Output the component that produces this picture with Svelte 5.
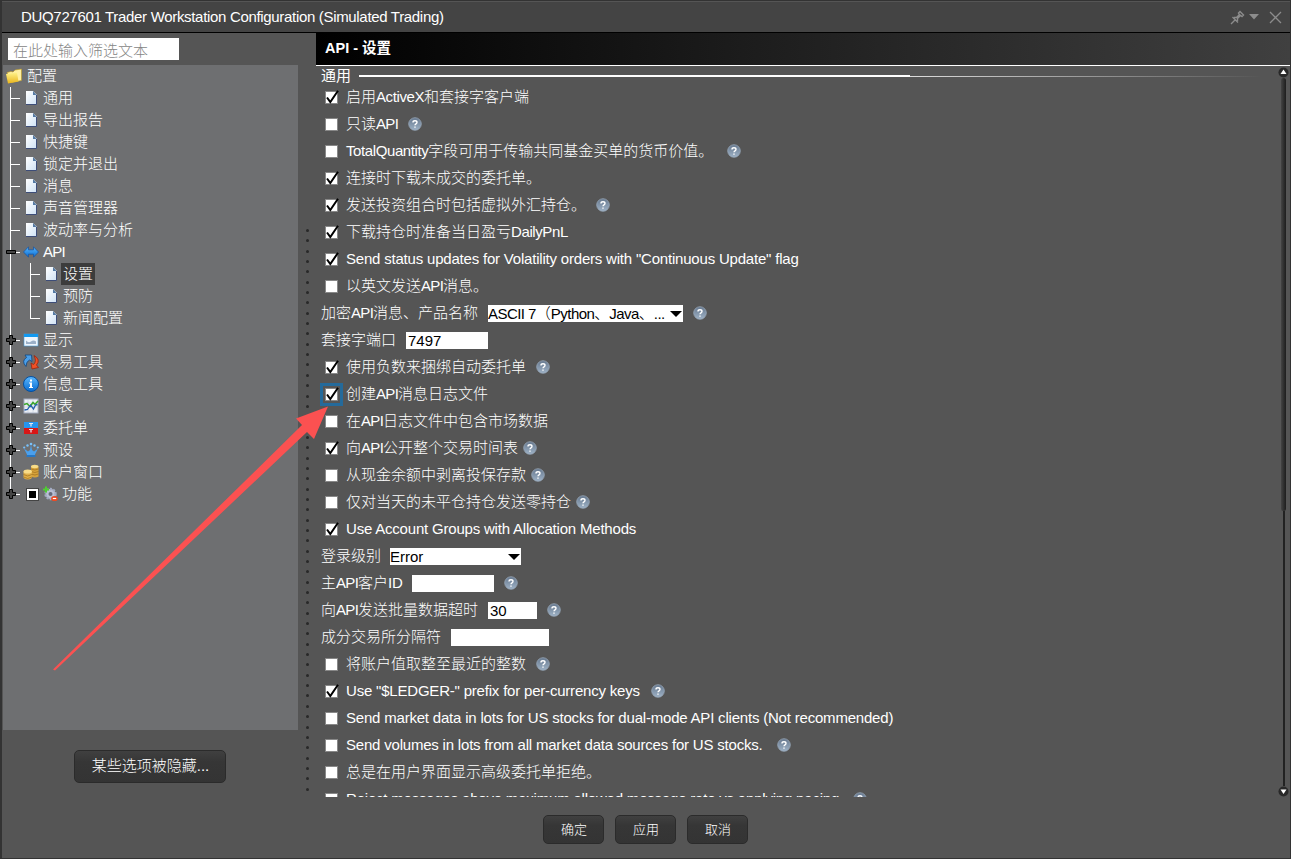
<script lang="ts">
	interface TreeNode {
		label: string;
		icon: string;
		level: number;
		expander?: 'plus' | 'minus';
		selected?: boolean;
		last?: boolean;
		check?: boolean;
	}

	interface Option {
		label: string;
		labelWidth?: number;
		kind?: 'check' | 'input' | 'select';
		checked?: boolean;
		focused?: boolean;
		value?: string;
		fieldWidth?: number;
		gap?: number;
		help?: boolean;
	}

	const tree: TreeNode[] = [
		{ label: '配置', icon: 'folder', level: 0 },
		{ label: '通用', icon: 'page', level: 1 },
		{ label: '导出报告', icon: 'page', level: 1 },
		{ label: '快捷键', icon: 'page', level: 1 },
		{ label: '锁定并退出', icon: 'page', level: 1 },
		{ label: '消息', icon: 'page', level: 1 },
		{ label: '声音管理器', icon: 'page', level: 1 },
		{ label: '波动率与分析', icon: 'page', level: 1 },
		{ label: 'API', icon: 'api', level: 1, expander: 'minus' },
		{ label: '设置', icon: 'page', level: 2, selected: true },
		{ label: '预防', icon: 'page', level: 2 },
		{ label: '新闻配置', icon: 'page', level: 2, last: true },
		{ label: '显示', icon: 'display', level: 1, expander: 'plus' },
		{ label: '交易工具', icon: 'trade', level: 1, expander: 'plus' },
		{ label: '信息工具', icon: 'info', level: 1, expander: 'plus' },
		{ label: '图表', icon: 'chart', level: 1, expander: 'plus' },
		{ label: '委托单', icon: 'order', level: 1, expander: 'plus' },
		{ label: '预设', icon: 'preset', level: 1, expander: 'plus' },
		{ label: '账户窗口', icon: 'coins', level: 1, expander: 'plus' },
		{ label: '功能', icon: 'feature', level: 1, expander: 'plus', last: true, check: true }
	];

	let options = $state<Option[]>([
		{ label: '启用ActiveX和套接字客户端', labelWidth: 183, checked: true },
		{ label: '只读API', labelWidth: 52, gap: 10, help: true },
		{ label: 'TotalQuantity字段可用于传输共同基金买单的货币价值。', labelWidth: 371, gap: 10, help: true },
		{ label: '连接时下载未成交的委托单。', checked: true },
		{ label: '发送投资组合时包括虚拟外汇持仓。', labelWidth: 240, gap: 10, checked: true, help: true },
		{ label: '下载持仓时准备当日盈亏DailyPnL', checked: true },
		{ label: 'Send status updates for Volatility orders with "Continuous Update" flag', checked: true },
		{ label: '以英文发送API消息。' },
		{ label: '加密API消息、产品名称', labelWidth: 167, kind: 'select', value: 'ASCII 7（Python、Java、...', fieldWidth: 195, gap: 10, help: true },
		{ label: '套接字端口', labelWidth: 85, kind: 'input', value: '7497', fieldWidth: 82 },
		{ label: '使用负数来捆绑自动委托单', labelWidth: 180, gap: 10, checked: true, help: true },
		{ label: '创建API消息日志文件', checked: true, focused: true },
		{ label: '在API日志文件中包含市场数据' },
		{ label: '向API公开整个交易时间表', labelWidth: 172, gap: 5, checked: true, help: true },
		{ label: '从现金余额中剥离投保存款', labelWidth: 180, gap: 5, help: true },
		{ label: '仅对当天的未平仓持仓发送零持仓', labelWidth: 225, gap: 5, help: true },
		{ label: 'Use Account Groups with Allocation Methods', checked: true },
		{ label: '登录级别', labelWidth: 69, kind: 'select', value: 'Error', fieldWidth: 131 },
		{ label: '主API客户ID', labelWidth: 91, kind: 'input', value: '', fieldWidth: 82, gap: 10, help: true },
		{ label: '向API发送批量数据超时', labelWidth: 167, kind: 'input', value: '30', fieldWidth: 49, gap: 10, help: true },
		{ label: '成分交易所分隔符', labelWidth: 130, kind: 'input', value: '', fieldWidth: 98 },
		{ label: '将账户值取整至最近的整数', labelWidth: 180, gap: 10, help: true },
		{ label: 'Use "$LEDGER-" prefix for per-currency keys', labelWidth: 295, gap: 10, checked: true, help: true },
		{ label: 'Send market data in lots for US stocks for dual-mode API clients (Not recommended)' },
		{ label: 'Send volumes in lots from all market data sources for US stocks.', labelWidth: 421, gap: 10, help: true },
		{ label: '总是在用户界面显示高级委托单拒绝。' },
		{ label: 'Reject messages above maximum allowed message rate vs applying pacing.', labelWidth: 497, gap: 10, help: true }
	]);

	const dots = Array.from({ length: 55 });

	function toggle(option: Option) {
		option.checked = !option.checked;
	}

	// Latin and CJK runs get their own tracking
	function runs(text: string) {
		return text.split(/([\x20-\x7e]+)/).filter(Boolean);
	}

	function isLatin(run: string) {
		return /^[\x20-\x7e]/.test(run);
	}
</script>

{#snippet mixed(text: string)}
	{#each runs(text) as run}<span class:latin={isLatin(run)} class:tight={run === 'API'} class:loose={run.length > 20 && isLatin(run)}>{run}</span>{/each}
{/snippet}

{#snippet treeIcon(name: string)}
	<svg class="icon" width="16" height="16" viewBox="0 0 16 16">
		{#if name === 'folder'}
			<path d="M1 4.500l4-1 2 .5 2-2 6.500-1v11.500l-10 2z" fill="#fff0a0" stroke="#b99524" stroke-width=".6" />
			<path d="M0 6l11-1.500 1.500 9L2 15.500z" fill="url(#gold)" />
		{:else if name === 'page'}
			<path d="M3 1h7l3.500 3.500v10H3z" fill="url(#paper)" />
			<path d="M13.500 5v9.500H3" fill="none" stroke="#3d4d78" />
			<path d="M10 1l3.500 4H10z" fill="#5379a3" />
		{:else if name === 'api'}
			<path d="M.500 8l5-5.200v3h5v-3l5 5.200-5 5.200v-3h-5v3z" fill="url(#blue)" stroke="#1d579f" stroke-width=".8" />
		{:else if name === 'display'}
			<rect x="1" y="2" width="14" height="12" fill="#eef5fc" stroke="#4a9ddb" stroke-width=".6" />
			<rect x="1" y="2" width="14" height="3" fill="#1299f0" />
			<path d="M3 8.500q2.500 3 5 1t5 0v2.500H3z" fill="#9bb0c8" />
		{:else if name === 'trade'}
			<path d="M3 12.500Q-2 7 3.500 3.500L2 1h6.500l.5 6.500L6.500 6Q3 7.500 3 12.500z" fill="#4a9ee8" stroke="#104681" stroke-width=".8" />
			<path d="M11 1.500q7 4 2.500 9.500l2 2.500-6.500 1.500-1-6 2.500 1.500q3.500-3 .5-9z" fill="#f05227" stroke="#99220c" stroke-width=".8" />
		{:else if name === 'info'}
			<circle cx="8" cy="8" r="7.500" fill="url(#blue)" stroke="#064f9e" />
			<path d="M7 3.500h2v2H7zM6 6.500h3v4.500h1v1H6v-1h1V7.500H6z" fill="#fff" />
		{:else if name === 'chart'}
			<rect x="1" y="1" width="14" height="14" fill="#eceff5" stroke="#a5aec1" />
			<path d="M1 5h14M1 9h14M5 1v14M10 1v14" stroke="#c2cada" stroke-width=".6" />
			<path d="M1 6.500l3-1 3 3 3-4 2 2 3-3.500" fill="none" stroke="#3aa72c" stroke-width="1.500" />
			<path d="M1.500 12l3-.5 3-4.500 3 4 2-4 2-.5" fill="none" stroke="#245fad" stroke-width="1.300" />
		{:else if name === 'order'}
			<rect x="1" y="2" width="14" height="6" fill="#2695ef" />
			<rect x="1" y="8" width="14" height="6" fill="#d81616" />
			<path d="M6 3.500h4M8 3.500v3M6 9.500h4M8 9.500v3" stroke="#dfe9f5" stroke-width="1.200" />
		{:else if name === 'preset'}
			<path d="M1 6.500l4 3 2-1.500 1-5.500 1 5.500 2 1.500 4-3-3 6v2H4v-2z" fill="#4ba0ed" />
			<path d="M3.500 13h9v2h-9z" fill="#2677c5" />
			<circle cx="8" cy="2" r="1.300" fill="#79c1fa" />
			<circle cx="4.500" cy="3.500" r="1.200" fill="#79c1fa" />
			<circle cx="11.500" cy="3.500" r="1.200" fill="#79c1fa" />
			<circle cx="1.200" cy="5.500" r="1.100" fill="#79c1fa" />
			<circle cx="14.800" cy="5.500" r="1.100" fill="#79c1fa" />
		{:else if name === 'coins'}
			<path d="M8 2.500v10q4 2 7.500 0v-10z" fill="#d5a23b" />
			<ellipse cx="11.700" cy="2.500" rx="3.700" ry="1.700" fill="#f8dc88" />
			<path d="M8 5q4 2 7.500 0M8 7.500q4 2 7.500 0M8 10q4 2 7.500 0" fill="none" stroke="#9f701d" stroke-width=".7" />
			<path d="M.500 7.500v6.500q4 3 8.500 0V7.500z" fill="#e0b04a" />
			<ellipse cx="4.700" cy="7.500" rx="4.200" ry="2" fill="#f8dc88" />
			<path d="M.500 10.500q4 3 8.500 0M.500 13q4 3 8.500 0" fill="none" stroke="#9f701d" stroke-width=".7" />
		{:else}
			<circle cx="8.500" cy="8" r="5" fill="#b9bfd3" stroke="#a3abc2" stroke-width="2.400" stroke-dasharray="2 1.200" />
			<circle cx="8.500" cy="8" r="2" fill="#65697a" />
			<path d="M1 3.500h6M4 .500v6" stroke="#4fce31" stroke-width="2" />
			<ellipse cx="12.500" cy="12.500" rx="3.300" ry="2.600" fill="#ed4a22" />
			<path d="M10.800 12.500h3.400" stroke="#fff" stroke-width="1.200" />
		{/if}
	</svg>
{/snippet}

{#snippet help()}
	<svg class="help" width="14" height="14" viewBox="0 0 14 14">
		<circle cx="7" cy="7" r="6.300" fill="url(#helpFill)" stroke="#96a4b5" stroke-width=".8" />
		<path d="M5 5.400q0-1.700 2-1.700t2 1.600q0 .9-1 1.500t-1 1.400M7 9.400v1.300" fill="none" stroke="#fff" stroke-width="1.400" />
	</svg>
{/snippet}

<svg class="defs" width="0" height="0">
	<defs>
		<linearGradient id="gold" x2="0" y2="1"><stop stop-color="#fff38a" /><stop offset="1" stop-color="#e9b51c" /></linearGradient>
		<linearGradient id="paper" x2="1" y2="1"><stop stop-color="#fff" /><stop offset="1" stop-color="#cfe2f5" /></linearGradient>
		<linearGradient id="blue" x2="0" y2="1"><stop stop-color="#5ab8ff" /><stop offset="1" stop-color="#086bd0" /></linearGradient>
		<linearGradient id="helpFill" x2="0" y2="1"><stop stop-color="#66788e" /><stop offset="1" stop-color="#9fb3c7" /></linearGradient>
	</defs>
</svg>

<div class="window">
	<header class="titlebar">
		<span class="title">DUQ727601 Trader Workstation Configuration (Simulated Trading)</span>
		<svg width="54" height="16" viewBox="0 0 54 16" fill="none" stroke="#8c8c8c">
			<path d="M1 15l4.500-4.500M2.500 8l5.500 5.500M4 8.500h2.500L9.500 5.500 8.500 4 10 2.500l3.500 3.500-1.500 1.500-1.500-1-3 3V12" stroke-width="1.400" />
			<path d="M19 5h10l-5 5.500z" fill="#8c8c8c" stroke="none" />
			<path d="M40 3l11 11M51 3L40 14" stroke-width="1.300" />
		</svg>
	</header>

	<div class="body">
		<aside class="sidebar">
			<input class="filter" placeholder="在此处输入筛选文本" />
			<div class="tree">
				{#each tree as node}
					<div class="node">
						{#if node.level > 0}
							<span class="guide" class:through={node.level === 2} class:end={node.level === 1 && node.last}>
								{#if node.expander}
									<svg width="10" height="10" viewBox="0 0 10 10">
										{#if node.expander === 'plus'}
											<path d="M3.500.500h3v3h3v3h-3v3h-3v-3h-3v-3h3z" fill="#444" stroke="#000" />
										{:else}
											<path d="M.500 3.500h9v3h-9z" fill="#444" stroke="#000" />
										{/if}
									</svg>
								{/if}
							</span>
						{/if}
						{#if node.level === 2}
							<span class="guide" class:end={node.last}></span>
						{/if}
						{#if node.check}
							<span class="tristate"></span>
						{/if}
						{@render treeIcon(node.icon)}
						<span class="node-label" class:selected={node.selected}>{@render mixed(node.label)}</span>
					</div>
				{/each}
			</div>
			<button class="button hidden-options">某些选项被隐藏...</button>
		</aside>

		<div class="splitter">
			{#each dots as _}
				<i></i>
			{/each}
		</div>

		<main class="content">
			<h1>API - 设置</h1>
			<div class="pane">
				<section class="options">
					<h2>通用 <span class="rule"></span><span class="fade"></span></h2>
					{#each options as option}
						<div class="row">
							{#if !option.kind}
								<button class="check" class:focused={option.focused} aria-label={option.label} onclick={() => toggle(option)}>
									{#if option.checked}
										<svg width="14" height="14" viewBox="0 0 14 14">
											<path d="M2 7.500l3.300 4.500L13 .8" fill="none" stroke="#000" stroke-width="2" />
										</svg>
									{/if}
								</button>
							{/if}
							<span class="label" style:width={option.labelWidth ? `${option.labelWidth}px` : null}>{@render mixed(option.label)}</span>
							{#if option.kind === 'input'}
								<input class="field" style:width="{option.fieldWidth}px" bind:value={option.value} />
							{:else if option.kind === 'select'}
								<div class="select" style:width="{option.fieldWidth}px">
									<span>{@render mixed(option.value ?? '')}</span>
									<svg width="12" height="6" viewBox="0 0 12 6"><path d="M0 0h12L6 6z" /></svg>
								</div>
							{/if}
							{#if option.help}
								<span style:padding-left="{option.gap}px">{@render help()}</span>
							{/if}
						</div>
					{/each}
				</section>
				<div class="scrollbar">
					<svg width="11" height="11" viewBox="0 0 11 11"><circle cx="5.500" cy="5.500" r="5" fill="#292929" /><path d="M5.500 2.500l3 4.500h-6z" fill="#fff" /></svg>
					<div class="thumb"></div>
					<div class="track"></div>
					<svg width="11" height="11" viewBox="0 0 11 11"><circle cx="5.500" cy="5.500" r="5" fill="#292929" /><path d="M5.500 8l3-4.500h-6z" fill="#fff" /></svg>
				</div>
			</div>
		</main>
	</div>

	<footer>
		<button class="button">确定</button>
		<button class="button">应用</button>
		<button class="button">取消</button>
	</footer>

	<svg class="pointer" width="1291" height="859" viewBox="0 0 1291 859">
		<path d="M53 669.500L302 425l-6-6.500 32-12-14 32.500-7-7L55 670.500z" fill="#fb5151" />
	</svg>
</div>

<style>
	:global(body) {
		margin: 0;
		background: #555;
	}

	.window {
		position: relative;
		box-sizing: border-box;
		display: flex;
		flex-direction: column;
		width: 1291px;
		height: 859px;
		overflow: hidden;
		border: 1px solid #333;
		border-left-width: 2px;
		background: #555;
		color: #fff;
		font: 300 15px/22px 'Liberation Sans', 'Noto Sans CJK SC', sans-serif;
		white-space: nowrap;
	}

	.defs {
		position: absolute;
	}

	.latin {
		letter-spacing: -0.4px;
	}

	.latin.loose {
		letter-spacing: -0.2px;
	}

	.latin.tight {
		letter-spacing: -0.7px;
	}

	.titlebar {
		box-sizing: border-box;
		display: flex;
		align-items: center;
		justify-content: space-between;
		height: 32px;
		flex: none;
		padding: 0 6px 0 19px;
		border-top: 1px solid #555;
		border-bottom: 1px solid #000;
		background: #444;
	}

	.title {
		letter-spacing: -0.32px;
	}

	.titlebar svg {
		display: block;
	}

	.body {
		display: flex;
		height: 764px;
		flex: none;
	}

	.sidebar {
		display: flex;
		flex-direction: column;
		width: 295px;
		flex: none;
	}

	.filter {
		box-sizing: border-box;
		width: 171px;
		height: 22px;
		flex: none;
		margin: 5px 0 5px 5px;
		padding: 3px 5px 0;
		border: 0;
		background: #fff;
		font: inherit;
		line-height: 19px;
	}

	.filter::placeholder {
		color: #858585;
	}

	.sidebar {
		padding-left: 1px;
	}

	.tree {
		height: 665px;
		flex: none;
		background: #6e6f71;
	}

	.node {
		display: flex;
		align-items: center;
		height: 22px;
	}

	.icon {
		flex: none;
		margin-right: 1px;
	}

	.node:first-child .icon {
		margin: 0 3px 0 3px;
	}

	.guide {
		display: flex;
		align-items: center;
		width: 20px;
		height: 22px;
		flex: none;
		background:
			linear-gradient(#fff, #fff) 7px 0 / 1px 22px no-repeat,
			linear-gradient(#fff, #fff) 7px 11px / 10px 1px no-repeat;
	}

	.guide.through {
		background: linear-gradient(#fff, #fff) 7px 0 / 1px 22px no-repeat;
	}

	.guide.end {
		background:
			linear-gradient(#fff, #fff) 7px 0 / 1px 12px no-repeat,
			linear-gradient(#fff, #fff) 7px 11px / 10px 1px no-repeat;
	}

	.guide svg {
		margin-left: 3px;
	}

	.tristate {
		box-sizing: border-box;
		width: 13px;
		height: 13px;
		margin: 0 3px;
		border: 3px solid #fff;
		outline: 1px solid #444;
		outline-offset: -1px;
		background: #000;
	}

	.node-label {
		height: 22px;
		padding: 0 2px 0 3px;
		line-height: 21px;
	}

	.node:first-child .node-label {
		padding-left: 2px;
	}

	.node-label.selected {
		margin-left: 1px;
		padding: 0 2px;
		background: #3c3c3c;
	}

	.button {
		box-sizing: border-box;
		width: 61px;
		height: 29px;
		padding: 0 0 0 1px;
		border: 1px solid #2b2b2b;
		border-radius: 5px;
		background: linear-gradient(#404040, #363636 35%, #343434);
		color: #fff;
		font: 300 13px/20px 'Liberation Sans', 'Noto Sans CJK SC', sans-serif;
	}

	.hidden-options {
		width: 152px;
		height: 33px;
		flex: none;
		margin: 20px 0 0 71px;
		padding-bottom: 2px;
		font-size: 15px;
	}

	.splitter {
		display: flex;
		flex-direction: column;
		justify-content: space-between;
		box-sizing: border-box;
		width: 18px;
		flex: none;
		padding: 196px 0 6px 8px;
	}

	.splitter i {
		width: 3px;
		height: 3px;
		border-radius: 50%;
		background: #292929;
	}

	.content {
		display: flex;
		flex-direction: column;
		flex: 1;
		min-width: 0;
	}

	h1 {
		height: 32px;
		margin: 0;
		flex: none;
		padding-left: 9px;
		border-bottom: 1px solid #fff;
		background: linear-gradient(90deg, #000, #404040);
		font-size: 14.500px;
		line-height: 31px;
	}

	.pane {
		display: flex;
		flex: 1;
		min-height: 0;
	}

	.options {
		flex: 1;
		min-width: 0;
		overflow: hidden;
		padding-left: 5px;
	}

	h2 {
		display: flex;
		align-items: center;
		box-sizing: border-box;
		height: 18px;
		margin: 0;
		padding-top: 2px;
		font-size: 15px;
		font-weight: 400;
		line-height: 16px;
	}

	.rule {
		width: 551px;
		height: 2px;
		margin-left: 8px;
		background: #fff;
	}

	.fade {
		width: 352px;
		height: 1px;
		background: linear-gradient(90deg, #ddd, #555);
	}

	.row {
		display: flex;
		align-items: center;
		height: 27px;
	}

	.check {
		box-sizing: border-box;
		width: 13px;
		height: 13px;
		flex: none;
		margin: 0 8px 0 4px;
		padding: 0;
		border: 1px solid #888;
		background: #fff;
	}

	.check svg {
		display: block;
		margin: -2px 0 0 -1px;
		overflow: visible;
	}

	.check.focused {
		outline: 3px solid #246a9b;
		outline-offset: 2px;
	}

	.label {
		flex: none;
		padding-bottom: 1px;
	}

	.field {
		box-sizing: border-box;
		height: 17px;
		padding: 0 2px;
		border: 0;
		background: #fff;
		color: #000;
		font: inherit;
		line-height: 17px;
	}

	.select {
		box-sizing: border-box;
		display: flex;
		align-items: center;
		justify-content: space-between;
		height: 17px;
		overflow: hidden;
		padding-right: 1px;
		background: #fff;
		color: #000;
		line-height: 16px;
	}

	.select .latin {
		letter-spacing: -0.55px;
	}

	.select span:only-child {
		letter-spacing: 0;
	}

	.select svg {
		flex: none;
	}

	.help {
		display: block;
		margin-bottom: 1px;
	}

	.scrollbar {
		display: flex;
		flex-direction: column;
		align-items: center;
		width: 11px;
		flex: none;
		padding: 1px 1px 0 0;
	}

	.scrollbar svg {
		flex: none;
	}

	.thumb {
		width: 5px;
		height: 433px;
		flex: none;
		border-radius: 3px;
		background: linear-gradient(90deg, #444, #1d1d1d);
	}

	.track {
		width: 2px;
		height: 275px;
		background: #222;
	}

	footer {
		display: flex;
		gap: 11px;
		padding: 18px 0 0 541px;
	}

	.pointer {
		position: absolute;
		top: -1px;
		left: -2px;
		pointer-events: none;
	}
</style>
